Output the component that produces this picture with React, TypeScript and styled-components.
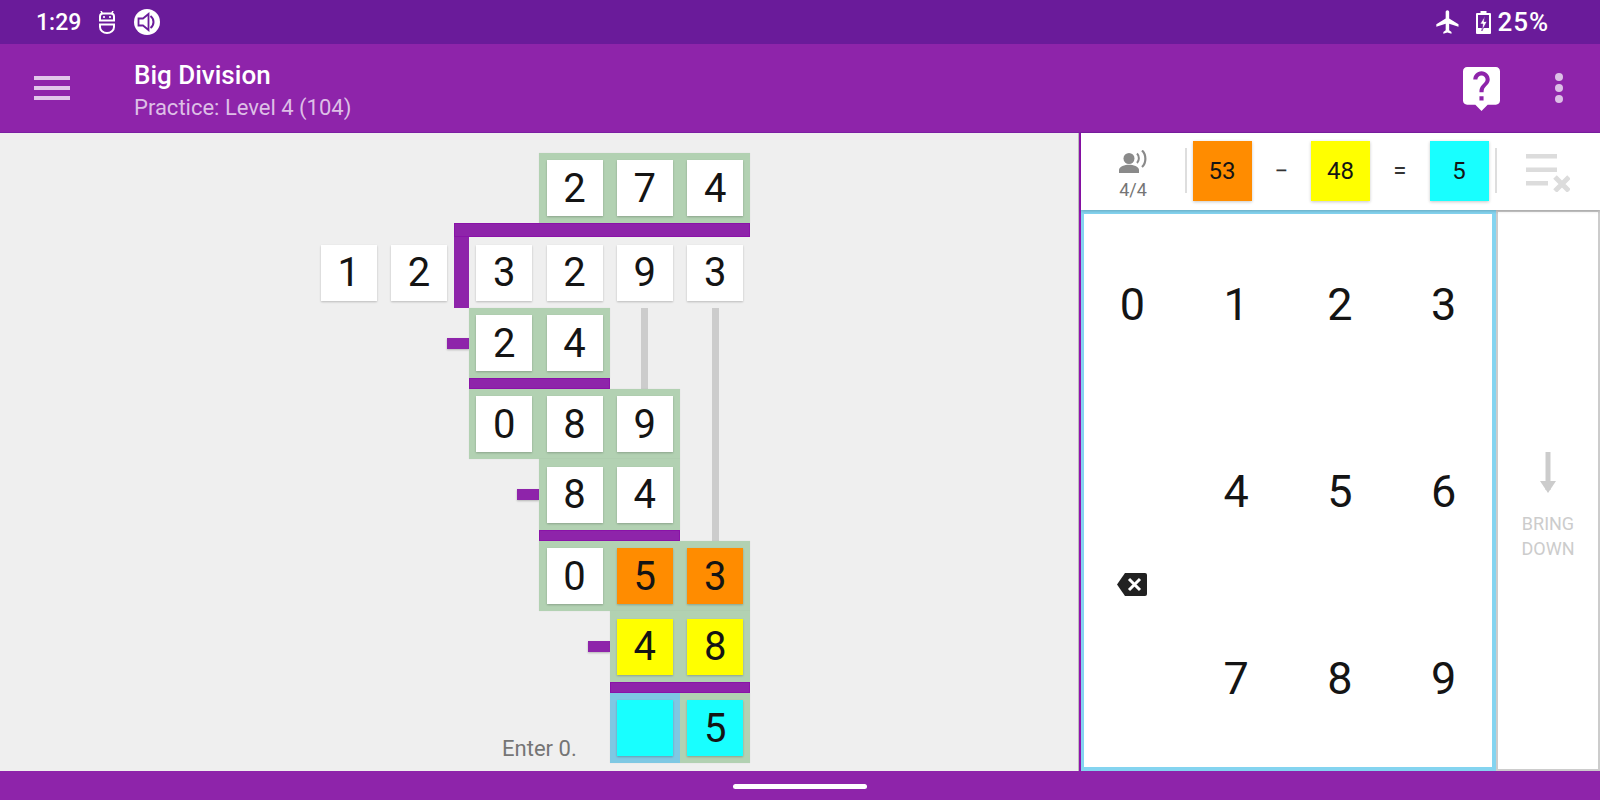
import styled, { createGlobalStyle } from "styled-components";

const PURPLE = "#8e24aa";
const PURPLE_DARK = "#6a1b9a";
const GREEN = "#b2d1b2";
const BLUE = "#84d4f0";
const CELL_BLUE = "#7ec8e3";
const ORANGE = "#ff8c00";
const YELLOW = "#ffff00";
const CYAN = "#18ffff";
const GREY_LINE = "#cccccc";

const GlobalStyle = createGlobalStyle`
  html, body {
    margin: 0;
    padding: 0;
    background: #efefef;
    font-family: Roboto, "Liberation Sans", sans-serif;
    overflow: hidden;
  }
  * {
    box-sizing: border-box;
  }
`;

const Page = styled.div`
  width: 1600px;
  height: 800px;
  display: flex;
  flex-direction: column;
`;

const StatusBar = styled.div`
  height: 44px;
  flex: none;
  background: ${PURPLE_DARK};
  color: #fff;
  display: flex;
  align-items: center;
  padding: 0 51px 0 36px;
  font-weight: 500;
`;

const Time = styled.span`
  font-size: 23px;
  margin-right: 17px;
`;

const StatusIcons = styled.div`
  display: flex;
  align-items: center;
  gap: 18px;
`;

const Spacer = styled.div`
  flex: 1;
`;

const Battery = styled.div`
  display: flex;
  align-items: center;
  gap: 7px;
  margin-left: 14px;
  font-size: 26px;
  letter-spacing: 0.9px;
`;

const AppBar = styled.div`
  height: 89px;
  flex: none;
  background: ${PURPLE};
  border-bottom: 1px solid #7b1fa2;
  display: flex;
  align-items: center;
  padding: 0 37px 0 34px;
`;

const Burger = styled.div`
  width: 36px;
  margin-right: 64px;
  display: flex;
  flex-direction: column;
  gap: 6px;
`;

const BurgerLine = styled.div`
  height: 4px;
  background: #e1c6ea;
`;

const Titles = styled.div`
  flex: 1;
  display: flex;
  flex-direction: column;
  gap: 5px;
  padding-top: 7px;
`;

const Title = styled.div`
  color: #fff;
  font-size: 26px;
  font-weight: 500;
  line-height: 28px;
`;

const Subtitle = styled.div`
  color: #ddbfe6;
  font-size: 22px;
  line-height: 28px;
`;

const HelpWrap = styled.div`
  display: flex;
  margin-right: 55px;
  padding-top: 1px;
`;

const Dots = styled.div`
  display: flex;
  flex-direction: column;
  gap: 3px;
`;

const Dot = styled.div`
  width: 8px;
  height: 8px;
  border-radius: 50%;
  background: #dcbfe6;
`;

const Main = styled.div`
  flex: 1;
  display: flex;
  min-height: 0;
`;

const Canvas = styled.div`
  width: 1079px;
  flex: none;
  background: #efefef;
  border-right: 1px solid #bdbdbd;
  padding: 20px 0 0 313.5px;
`;

const Board = styled.div`
  display: grid;
  grid-template-columns: 70.3px 70.3px 15px 70.3px 70.3px 70.3px 70.3px;
  grid-template-rows: 70px 14px 71px 70px 11px 70px 71px 11px 70px 71px 11px 70px;
`;

const Block = styled.div<{ $col: string; $row: number }>`
  grid-column: ${({ $col }) => $col};
  grid-row: ${({ $row }) => $row};
  display: flex;
  background: ${GREEN};
  box-shadow: 0 0 1px rgba(0, 0, 0, 0.1);
  z-index: 1;
`;

const PlainRow = styled(Block)`
  background: transparent;
  box-shadow: none;
`;

const Slot = styled.div<{ $bg?: string }>`
  width: 70.3px;
  flex: none;
  display: flex;
  align-items: center;
  justify-content: center;
  background: ${({ $bg }) => $bg ?? "transparent"};
`;

const Tile = styled.div<{ $bg?: string }>`
  width: 56px;
  height: 56px;
  background: ${({ $bg }) => $bg ?? "#fff"};
  color: #141414;
  font-size: 40px;
  font-weight: 375;
  display: flex;
  align-items: center;
  justify-content: center;
  box-shadow: 0 1px 2px rgba(0, 0, 0, 0.22);
`;

const Rule = styled.div<{ $col: string; $row: number }>`
  grid-column: ${({ $col }) => $col};
  grid-row: ${({ $row }) => $row};
  background: ${PURPLE};
  box-shadow: inset 0 0 0 1px #8a12a8;
  z-index: 2;
`;

const Post = styled.div`
  grid-column: 3;
  grid-row: 2 / 4;
  background: ${PURPLE};
`;

const Minus = styled.div<{ $col: string; $row: number }>`
  grid-column: ${({ $col }) => $col};
  grid-row: ${({ $row }) => $row};
  justify-self: end;
  align-self: center;
  width: 22px;
  height: 11px;
  background: ${PURPLE};
  box-shadow: 0 1px 2px rgba(0, 0, 0, 0.25);
`;

const Drop = styled.div<{ $col: number; $row: string }>`
  grid-column: ${({ $col }) => $col};
  grid-row: ${({ $row }) => $row};
  justify-self: center;
  width: 7px;
  background: ${GREY_LINE};
`;

const Hint = styled.div`
  grid-column: 1 / 6;
  grid-row: 12;
  justify-self: end;
  align-self: end;
  margin: 0 33px 2px 0;
  color: #757575;
  font-size: 22px;
  line-height: 24px;
`;

const Side = styled.div`
  flex: 1;
  min-width: 0;
  background: #fff;
  border-left: 2px solid #9012b0;
  display: flex;
  flex-direction: column;
`;

const Equation = styled.div`
  height: 77px;
  flex: none;
  display: flex;
  align-items: center;
  padding-bottom: 2px;
  background: #fff;
  box-shadow: 0 1px 3px rgba(0, 0, 0, 0.22);
  z-index: 1;
`;

const Voice = styled.div`
  width: 104px;
  flex: none;
  display: flex;
  flex-direction: column;
  align-items: center;
  gap: 7px;
  color: #757575;
  font-size: 18px;
  font-weight: 375;
  line-height: 20px;
  padding-top: 8px;
`;

const Sep = styled.div`
  width: 2px;
  height: 45px;
  flex: none;
  background: #dedede;
`;

const EqBox = styled.div<{ $bg: string }>`
  width: 59px;
  height: 60px;
  flex: none;
  background: ${({ $bg }) => $bg};
  color: #141414;
  font-size: 24px;
  font-weight: 375;
  display: flex;
  align-items: center;
  justify-content: center;
  box-shadow: 0 1px 3px rgba(0, 0, 0, 0.22);
`;

const FirstBox = styled(EqBox)`
  margin-left: 5.500px;
`;

const LastBox = styled(EqBox)`
  margin-right: 6px;
`;

const EqSign = styled.div`
  width: 59.5px;
  flex: none;
  text-align: center;
  font-size: 24px;
  font-weight: 375;
  color: #333;
`;

const ClearWrap = styled.div`
  flex: 1;
  display: flex;
  justify-content: flex-start;
  padding-left: 29px;
  padding-top: 5px;
`;

const Lower = styled.div`
  flex: 1;
  display: flex;
  min-height: 0;
`;

const Keypad = styled.div`
  width: 415px;
  flex: none;
  border: 4px solid ${BLUE};
  border-left-width: 3px;
  display: grid;
  grid-template-columns: repeat(4, 103.7px);
  grid-template-rows: repeat(3, 187px);
  justify-content: center;
  align-content: center;
`;

const Key = styled.div`
  display: flex;
  align-items: center;
  justify-content: center;
  padding-top: 2px;
  font-size: 45px;
  font-weight: 375;
  color: #141414;
`;

const BackKey = styled(Key)`
  grid-column: 1;
  grid-row: 2 / 4;
  padding-top: 0;
`;

const BringDown = styled.div`
  flex: 1;
  border: 2px solid ${GREY_LINE};
  display: flex;
  flex-direction: column;
  align-items: center;
  justify-content: center;
  color: ${GREY_LINE};
  font-size: 18px;
  line-height: 25px;
  text-align: center;
  gap: 17px;
  padding-top: 31px;
`;

const NavBar = styled.div`
  height: 29px;
  flex: none;
  background: ${PURPLE};
  display: flex;
  align-items: flex-end;
  justify-content: center;
  padding-bottom: 11px;
`;

const NavPill = styled.div`
  width: 134px;
  height: 5px;
  border-radius: 3px;
  background: #fff;
`;

function RobotIcon() {
  return (
    <svg width="18" height="23" viewBox="0 0 18 23" fill="none" stroke="#fff" strokeWidth="2">
      <path d="M3 0 4.500 3M15 0 13.500 3" strokeWidth="1.600" />
      <path d="M2 9.500V5.500Q2 2.500 5 2.500H13Q16 2.500 16 5.500V9.500Z" />
      <path d="M2 13.500H16V16A7 6 0 0 1 2 16Z" />
      <circle cx="6" cy="6" r="1.100" fill="#fff" stroke="none" />
      <circle cx="12" cy="6" r="1.100" fill="#fff" stroke="none" />
    </svg>
  );
}

function SoundIcon() {
  return (
    <svg width="26" height="26" viewBox="0 0 26 26">
      <circle cx="13" cy="13" r="13" fill="#fff" />
      <path d="M4.500 9.500H9L14.500 5V21L9 16.500H4.500Z" fill="#fff" stroke={PURPLE_DARK} strokeWidth="1.800" />
      <path d="M16.500 7A7.500 7.500 0 0 1 16.500 19" fill="none" stroke={PURPLE_DARK} strokeWidth="2" />
    </svg>
  );
}

function PlaneIcon() {
  return (
    <svg width="28" height="28" viewBox="0 0 24 24" fill="#fff">
      <path d="M21 16v-2l-8-5V3.500c0-.83-.67-1.500-1.500-1.500S10 2.670 10 3.500V9l-8 5v2l8-2.500V19l-2 1.500V22l3.500-1 3.500 1v-1.500L13 19v-5.500l8 2.500z" />
    </svg>
  );
}

function BatteryIcon() {
  return (
    <svg width="15" height="23" viewBox="0 0 15 23">
      <path
        fill="#fff"
        fillRule="evenodd"
        d="M4.500 0H10.500V2H14A1 1 0 0 1 15 3V22A1 1 0 0 1 14 23H1A1 1 0 0 1 0 22V3A1 1 0 0 1 1 2H4.500ZM2 4V21H13V4Z"
      />
      <path fill="#fff" d="M2 17H13V21H2Z" />
      <path fill="#fff" stroke={PURPLE_DARK} strokeWidth="0.700" d="M9 5 4 13H6.800L5.800 20 11 10.500H8Z" />
    </svg>
  );
}

function HelpIcon() {
  return (
    <svg width="37" height="44" viewBox="3 2 18 21" preserveAspectRatio="none" fill="#fff">
      <path d="M19 2H5c-1.110 0-2 .9-2 2v14c0 1.100.89 2 2 2h4l3 3 3-3h4c1.100 0 2-.9 2-2V4c0-1.100-.9-2-2-2zm-6 16h-2v-2h2v2zm2.070-7.750l-.9.920C13.450 11.900 13 12.500 13 14h-2v-.5c0-1.100.45-2.100 1.170-2.830l1.240-1.260c.37-.36.59-.86.59-1.410 0-1.100-.9-2-2-2s-2 .9-2 2H8c0-2.210 1.790-4 4-4s4 1.790 4 4c0 .88-.36 1.680-.93 2.250z" />
    </svg>
  );
}

function VoiceIcon() {
  return (
    <svg width="28" height="23" viewBox="0 0 28 23" fill="#8a8a8a">
      <circle cx="10" cy="8.500" r="5.500" />
      <path d="M0 20C0 16.500 6 14.800 10 14.800S20 16.500 20 20V23H0Z" />
      <path d="M18 3.500C20.500 6 20.500 10.500 18 13" fill="none" stroke="#8a8a8a" strokeWidth="2" />
      <path d="M23 0.500C27.500 4.500 27.500 13 23 17" fill="none" stroke="#8a8a8a" strokeWidth="2.200" />
    </svg>
  );
}

function ClearIcon() {
  return (
    <svg width="44" height="38" viewBox="0 0 44 38" fill="none" stroke="#dcdcdc">
      <path d="M0 2.200H31M0 15.800H31M0 29.300H22" strokeWidth="4.500" />
      <path d="M29 23 43 37M43 23 29 37" strokeWidth="5" />
    </svg>
  );
}

function BackspaceIcon() {
  return (
    <svg width="30" height="23" viewBox="0 0 30 23">
      <path d="M8 0H28A2 2 0 0 1 30 2V21A2 2 0 0 1 28 23H8L0 11.500Z" fill="#212121" />
      <path d="M12 6 23 17M23 6 12 17" stroke="#fff" strokeWidth="3" />
    </svg>
  );
}

function DownArrow() {
  return (
    <svg width="18" height="42" viewBox="0 0 18 42" fill="none" stroke={GREY_LINE}>
      <path d="M9 0V38" strokeWidth="5" />
      <path d="M1 29H17L9 41Z" fill={GREY_LINE} stroke="none" />
    </svg>
  );
}

export default function App() {
  return (
    <Page>
      <GlobalStyle />
      <StatusBar>
        <Time>1:29</Time>
        <StatusIcons>
          <RobotIcon />
          <SoundIcon />
        </StatusIcons>
        <Spacer />
        <PlaneIcon />
        <Battery>
          <BatteryIcon />
          25%
        </Battery>
      </StatusBar>
      <AppBar>
        <Burger>
          <BurgerLine />
          <BurgerLine />
          <BurgerLine />
        </Burger>
        <Titles>
          <Title>Big Division</Title>
          <Subtitle>Practice: Level 4 (104)</Subtitle>
        </Titles>
        <HelpWrap>
          <HelpIcon />
        </HelpWrap>
        <Dots>
          <Dot />
          <Dot />
          <Dot />
        </Dots>
      </AppBar>
      <Main>
        <Canvas>
          <Board>
            <Block $col="5 / 8" $row={1}>
              <Slot><Tile>2</Tile></Slot>
              <Slot><Tile>7</Tile></Slot>
              <Slot><Tile>4</Tile></Slot>
            </Block>
            <Rule $col="3 / 8" $row={2} />
            <Post />
            <PlainRow $col="1 / 3" $row={3}>
              <Slot><Tile>1</Tile></Slot>
              <Slot><Tile>2</Tile></Slot>
            </PlainRow>
            <PlainRow $col="4 / 8" $row={3}>
              <Slot><Tile>3</Tile></Slot>
              <Slot><Tile>2</Tile></Slot>
              <Slot><Tile>9</Tile></Slot>
              <Slot><Tile>3</Tile></Slot>
            </PlainRow>

            <Minus $col="2 / 4" $row={4} />
            <Block $col="4 / 6" $row={4}>
              <Slot><Tile>2</Tile></Slot>
              <Slot><Tile>4</Tile></Slot>
            </Block>
            <Rule $col="4 / 6" $row={5} />
            <Drop $col={6} $row="4 / 6" />
            <Drop $col={7} $row="4 / 9" />

            <Block $col="4 / 7" $row={6}>
              <Slot><Tile>0</Tile></Slot>
              <Slot><Tile>8</Tile></Slot>
              <Slot><Tile>9</Tile></Slot>
            </Block>
            <Minus $col="4" $row={7} />
            <Block $col="5 / 7" $row={7}>
              <Slot><Tile>8</Tile></Slot>
              <Slot><Tile>4</Tile></Slot>
            </Block>
            <Rule $col="5 / 7" $row={8} />

            <Block $col="5 / 8" $row={9}>
              <Slot><Tile>0</Tile></Slot>
              <Slot><Tile $bg={ORANGE}>5</Tile></Slot>
              <Slot><Tile $bg={ORANGE}>3</Tile></Slot>
            </Block>
            <Minus $col="5" $row={10} />
            <Block $col="6 / 8" $row={10}>
              <Slot><Tile $bg={YELLOW}>4</Tile></Slot>
              <Slot><Tile $bg={YELLOW}>8</Tile></Slot>
            </Block>
            <Rule $col="6 / 8" $row={11} />
            <Block $col="6 / 8" $row={12}>
              <Slot $bg={CELL_BLUE}><Tile $bg={CYAN} /></Slot>
              <Slot><Tile $bg={CYAN}>5</Tile></Slot>
            </Block>
            <Hint>Enter 0.</Hint>
          </Board>
        </Canvas>
        <Side>
          <Equation>
            <Voice>
              <VoiceIcon />
              4/4
            </Voice>
            <Sep />
            <FirstBox $bg={ORANGE}>53</FirstBox>
            <EqSign>−</EqSign>
            <EqBox $bg={YELLOW}>48</EqBox>
            <EqSign>=</EqSign>
            <LastBox $bg={CYAN}>5</LastBox>
            <Sep />
            <ClearWrap>
              <ClearIcon />
            </ClearWrap>
          </Equation>
          <Lower>
            <Keypad>
              <Key>0</Key>
              <Key>1</Key>
              <Key>2</Key>
              <Key>3</Key>
              <BackKey>
                <BackspaceIcon />
              </BackKey>
              <Key>4</Key>
              <Key>5</Key>
              <Key>6</Key>
              <Key>7</Key>
              <Key>8</Key>
              <Key>9</Key>
            </Keypad>
            <BringDown>
              <DownArrow />
              <div>
                BRING
                <br />
                DOWN
              </div>
            </BringDown>
          </Lower>
        </Side>
      </Main>
      <NavBar>
        <NavPill />
      </NavBar>
    </Page>
  );
}
